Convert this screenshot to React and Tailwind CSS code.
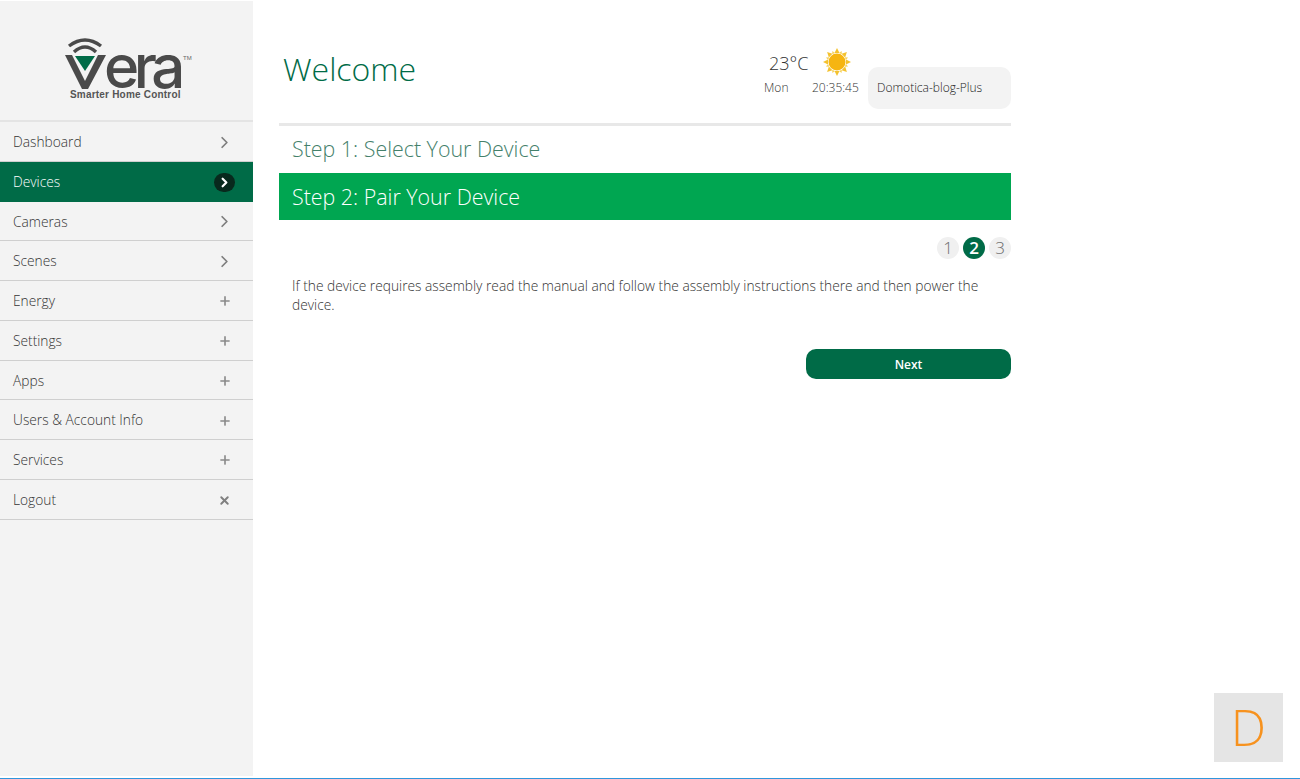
import { ChevronRight, Plus, X } from 'lucide-react';

const menu = [
    { label: 'Dashboard', icon: 'chevron' },
    { label: 'Devices', icon: 'chevron', active: true },
    { label: 'Cameras', icon: 'chevron' },
    { label: 'Scenes', icon: 'chevron' },
    { label: 'Energy', icon: 'plus' },
    { label: 'Settings', icon: 'plus' },
    { label: 'Apps', icon: 'plus' },
    { label: 'Users & Account Info', icon: 'plus' },
    { label: 'Services', icon: 'plus' },
    { label: 'Logout', icon: 'x' },
];

const VeraLogo = () => (
    <div className="relative h-[66px] w-[130px]">
        <svg className="absolute left-0 top-0" width="46" height="54" viewBox="0 0 46 54">
            <path d="M4 9 Q20 -3 36 9" fill="none" stroke="#4a4a4a" strokeWidth="3.4" />
            <path d="M9 15 Q20 5 31 15" fill="none" stroke="#4a4a4a" strokeWidth="3.4" />
            <polygon points="0,18 7,18 20,44 33,18 41,18 23,52 17,52" fill="#4a4a4a" />
            <polygon points="10,19 30,19 20,34" fill="#006b47" />
        </svg>
        <span className="absolute left-[39px] top-[10px] font-['Inter',sans-serif] text-[60px] leading-[38px] font-medium tracking-[-5.5px] text-[#4a4a4a]">
            era
        </span>
        <span className="absolute left-[118px] top-[18px] font-['Liberation_Sans',sans-serif] text-[6px] leading-[6px] text-[#666666]">TM</span>
        <span className="absolute left-[5px] top-[53px] font-['Liberation_Sans',sans-serif] text-[10px] leading-[10px] font-bold tracking-[0.2px] whitespace-nowrap text-[#555555]">
            Smarter Home Control
        </span>
    </div>
);

const MenuIcon = ({ icon, active }) => {
    if (active) {
        return (
            <span className="flex h-[19px] w-[21px] items-center justify-center rounded-full bg-[#08291d]">
                <ChevronRight size={15} strokeWidth={3.5} className="text-white" />
            </span>
        );
    }
    if (icon === 'chevron') return <ChevronRight size={19} strokeWidth={2.2} className="text-[#7d7d7d]" />;
    if (icon === 'plus') return <Plus size={14} strokeWidth={2.8} className="text-[#8a8a8a]" />;
    return <X size={13} strokeWidth={3.6} className="text-[#808080]" />;
};

const Sidebar = () => (
    <aside className="mt-[1px] h-[775px] w-[253px] shrink-0 bg-[#f3f3f3]">
        <div className="flex h-[121px] items-start justify-center border-b-2 border-[#e4e4e4] pt-[36px] pl-[7px]">
            <VeraLogo />
        </div>
        {menu.map((item) => (
            <div
                key={item.label}
                className={`flex h-[39.75px] items-center justify-between pt-[2px] pl-[13px] pr-[18px] text-[13.75px] font-light ${
                    item.active ? 'bg-[#006b47] text-white' : 'border-b border-[#cfcfcf] text-[#333333]'
                }`}
            >
                <span>{item.label}</span>
                <span className="flex w-[21px] justify-center">
                    <MenuIcon icon={item.icon} active={item.active} />
                </span>
            </div>
        ))}
    </aside>
);

const Sun = () => (
    <svg width="30" height="30" viewBox="0 0 30 30">
        {[0, 45, 90, 135, 180, 225, 270, 315].map((a) => (
            <polygon key={a} points="12.5,6 15,1 17.5,6" fill="#f4c22f" transform={`rotate(${a} 15 15) `} />
        ))}
        {[22.5, 67.5, 112.5, 157.5, 202.5, 247.5, 292.5, 337.5].map((a) => (
            <polygon key={a} points="13.5,6 15,3 16.5,6" fill="#f7d25c" transform={`rotate(${a} 15 15)`} />
        ))}
        <circle cx="15" cy="15" r="8.5" fill="#f6b511" />
    </svg>
);

const Header = () => (
    <header className="flex h-[126px] border-b-[3px] border-[#e8e8e8]">
        <h1 className="pt-[47px] pl-[4px] text-[32px] leading-[44px] font-light text-[#006b47]">Welcome</h1>
        <div className="ml-auto flex w-[104px] flex-col pt-[45px]">
            <div className="flex h-[33px] items-center">
                <span className="ml-[5px] w-[53px] pt-[3px] text-[18px] font-light text-[#333333]">23°C</span>
                <Sun />
            </div>
            <div className="mt-[1px] flex text-[12px] leading-[18px] font-light text-[#333333]">
                <span className="w-[48px]">Mon</span>
                <span>20:35:45</span>
            </div>
        </div>
        <div className="mt-[67px] flex h-[42px] w-[143px] items-center rounded-[10px] bg-[#f3f3f3] pl-[9px] text-[12px] font-light text-[#222222]">
            Domotica-blog-Plus
        </div>
    </header>
);

const Pager = () => (
    <div className="mt-[17px] flex justify-end gap-[4px]">
        {[1, 2, 3].map((n) => (
            <span
                key={n}
                className={`flex h-[22px] w-[22px] items-center justify-center rounded-full text-[17px] ${
                    n === 2 ? 'bg-[#006b47] font-semibold text-white' : 'bg-[#f0f0f0] font-light text-[#6b6b6b]'
                }`}
            >
                {n}
            </span>
        ))}
    </div>
);

export default function App() {
    return (
        <div className="relative flex h-[779px] overflow-hidden border-b border-[#2f96dc] bg-white font-['Open_Sans',sans-serif]">
            <Sidebar />
            <main className="ml-[26px] w-[732px]">
                <Header />
                <div className="flex h-[47px] items-center pl-[13px] text-[21.4px] font-light text-[#44806a]">
                    Step 1: Select Your Device
                </div>
                <div className="flex h-[47px] items-center bg-[#00a651] pt-[2px] pl-[13px] text-[21.4px] font-light text-white">
                    Step 2: Pair Your Device
                </div>
                <Pager />
                <p className="mt-[17px] px-[13px] text-[13.75px] leading-[19px] font-light text-[#333333]">
                    If the device requires assembly read the manual and follow the assembly instructions there and then power the device.
                </p>
                <div className="mt-[35px] flex justify-end">
                    <button className="h-[30px] w-[205px] rounded-[10px] bg-[#006b47] pt-[2px] text-[12px] font-semibold text-white">Next</button>
                </div>
            </main>
            <div className="absolute left-[1214px] top-[693px] flex h-[69px] w-[69px] items-center justify-center bg-[#e5e5e5] text-[50px] font-light text-[#f7921e]">
                D
            </div>
        </div>
    );
}
